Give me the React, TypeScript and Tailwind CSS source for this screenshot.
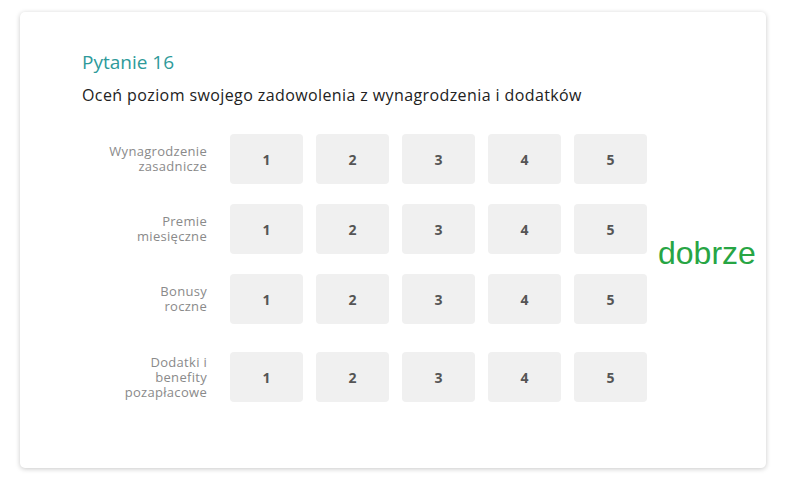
const rows = [
  { label: ["Wynagrodzenie", "zasadnicze"], mt: "mt-0" },
  { label: ["Premie", "miesięczne"], mt: "mt-[20px]" },
  { label: ["Bonusy", "roczne"], mt: "mt-[20px]" },
  { label: ["Dodatki i", "benefity", "pozapłacowe"], mt: "mt-[28px]" },
];

export default function App() {
  return (
    <div className="h-[493px] w-[800px] bg-white pl-[20px] pt-[12px] font-['Open_Sans',sans-serif]">
      <div className="h-[456px] w-[746px] rounded-[5px] bg-white pl-[62px] pt-[38px] shadow-[0_1px_5px_rgba(0,0,0,0.22)]">
        <h1 className="text-[19px] leading-[24px] text-[#2e9a9a]">Pytanie 16</h1>
        <p className="mt-[10px] text-[16px] leading-[22px] tracking-[0.4px] text-[#222]">
          Oceń poziom swojego zadowolenia z wynagrodzenia i dodatków
        </p>

        <div className="mt-[28px] flex items-start">
          <div className="flex flex-col">
            {rows.map((row) => (
              <div key={row.label.join(" ")} className={`flex items-center ${row.mt}`}>
                <div className="w-[125px] text-right text-[13px] leading-[15px] tracking-[0.3px] text-[#8a8a8a]">
                  {row.label.map((l) => (
                    <div key={l}>{l}</div>
                  ))}
                </div>
                <div className="ml-[23px] flex gap-[13px]">
                  {[1, 2, 3, 4, 5].map((n) => (
                    <button
                      key={n}
                      className="flex h-[50px] w-[73px] items-center justify-center rounded-[4px] bg-[#f0f0f0] text-[14px] font-bold text-[#555]"
                    >
                      {n}
                    </button>
                  ))}
                </div>
              </div>
            ))}
          </div>
          <div className="ml-[11px] mt-[101px] font-['Liberation_Sans',sans-serif] text-[32px] leading-[37px] text-[#27a544]">
            dobrze
          </div>
        </div>
      </div>
    </div>
  );
}
